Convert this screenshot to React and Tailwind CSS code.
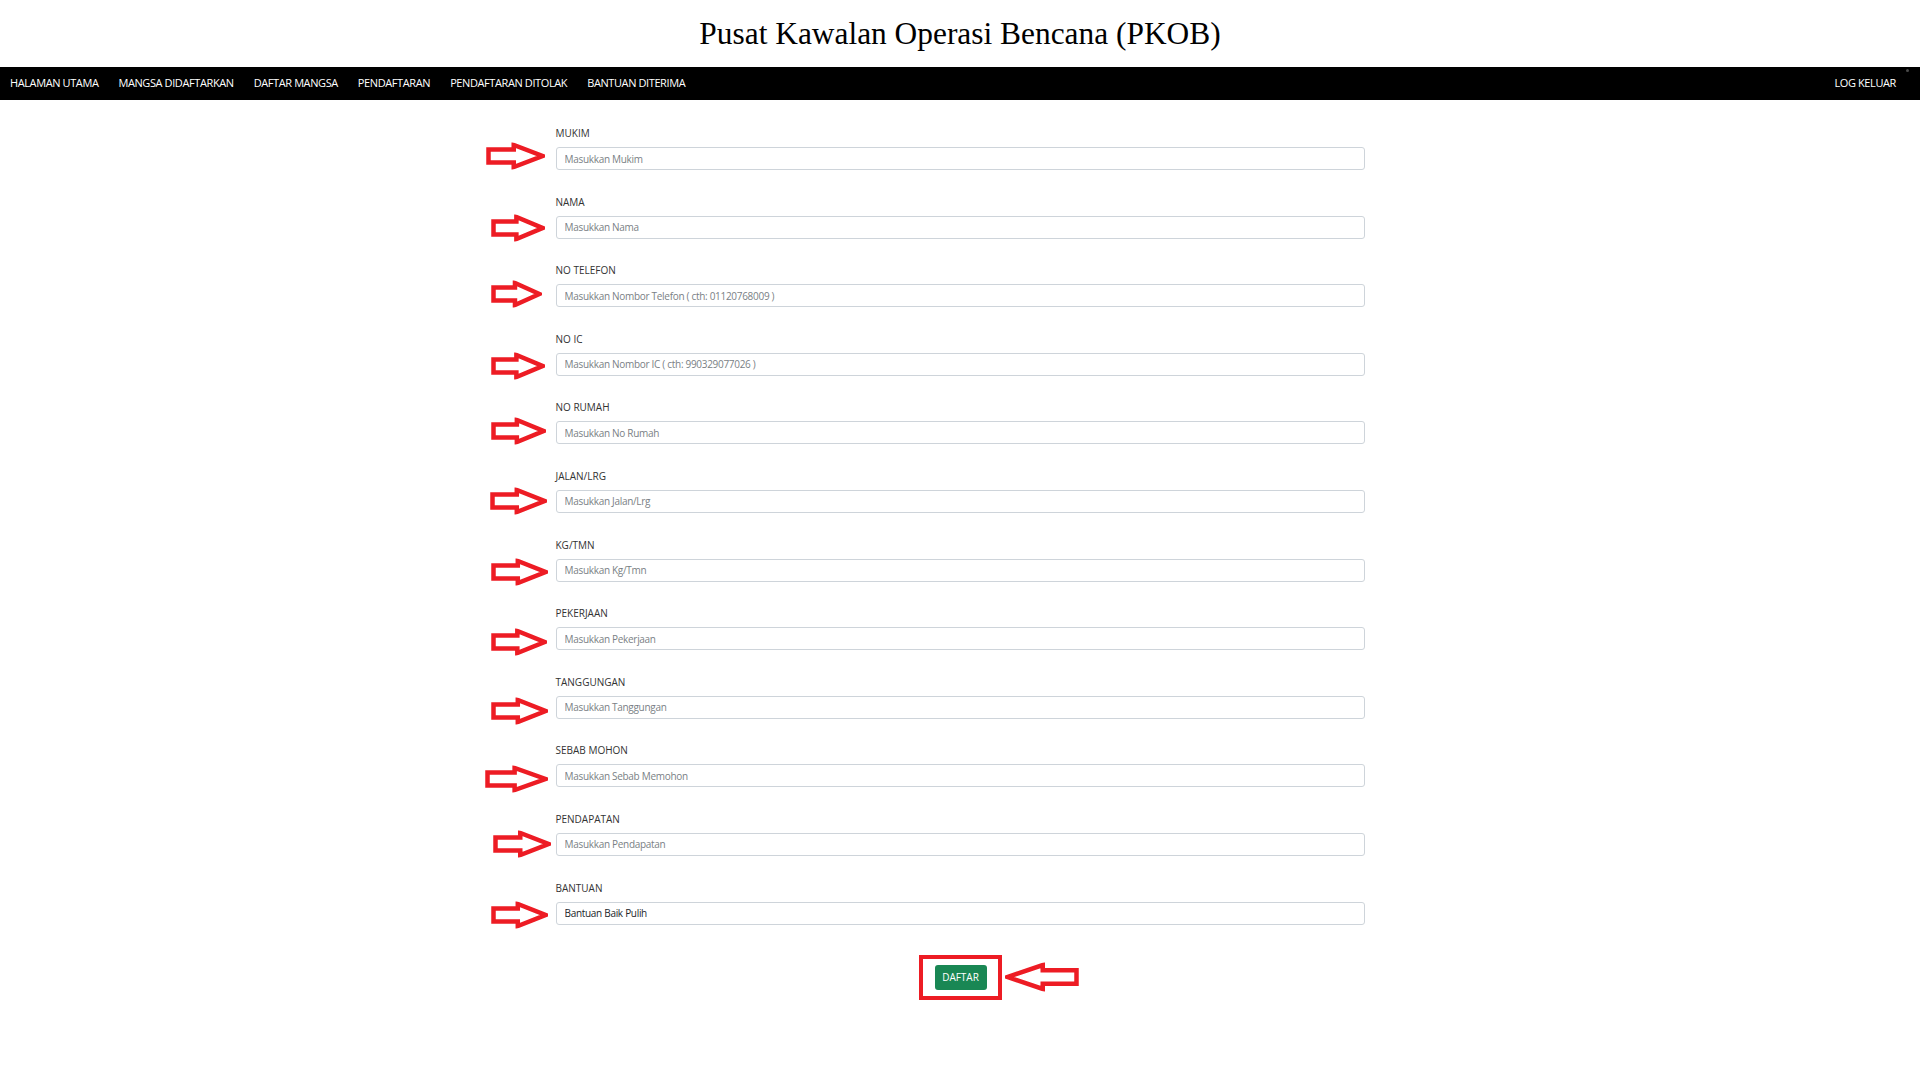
import { useState } from 'react'

const navItems = [
    'HALAMAN UTAMA',
    'MANGSA DIDAFTARKAN',
    'DAFTAR MANGSA',
    'PENDAFTARAN',
    'PENDAFTARAN DITOLAK',
    'BANTUAN DITERIMA',
]

// gap = distance from arrow tip to input, dy = offset from input centre
const fields = [
    { label: 'MUKIM', placeholder: 'Masukkan Mukim', gap: 11, w: 59, dy: -3 },
    { label: 'NAMA', placeholder: 'Masukkan Nama', gap: 11, w: 54, dy: 1 },
    { label: 'NO TELEFON', placeholder: 'Masukkan Nombor Telefon ( cth: 01120768009 )', gap: 14, w: 51, dy: -2 },
    { label: 'NO IC', placeholder: 'Masukkan Nombor IC ( cth: 990329077026 )', gap: 11, w: 54, dy: 2 },
    { label: 'NO RUMAH', placeholder: 'Masukkan No Rumah', gap: 10, w: 55, dy: -2 },
    { label: 'JALAN/LRG', placeholder: 'Masukkan Jalan/Lrg', gap: 9, w: 57, dy: 0 },
    { label: 'KG/TMN', placeholder: 'Masukkan Kg/Tmn', gap: 8, w: 57, dy: 2 },
    { label: 'PEKERJAAN', placeholder: 'Masukkan Pekerjaan', gap: 9, w: 56, dy: 3 },
    { label: 'TANGGUNGAN', placeholder: 'Masukkan Tanggungan', gap: 8, w: 57, dy: 4 },
    { label: 'SEBAB MOHON', placeholder: 'Masukkan Sebab Memohon', gap: 8, w: 63, dy: 3 },
    { label: 'PENDAPATAN', placeholder: 'Masukkan Pendapatan', gap: 5, w: 58, dy: 0 },
    { label: 'BANTUAN', value: 'Bantuan Baik Pulih', gap: 8, w: 57, dy: 2 },
]

const RED = '#ed1c24'

const ArrowRight = ({ w, h = 27 }) => {
    const s = 2.5
    const head = w * 0.47
    const t1 = h * 0.26
    const t2 = h * 0.74
    const pts = [
        [s, t1], [head, t1], [head, s], [w - s, h / 2], [head, h - s], [head, t2], [s, t2],
    ].map((p) => p.join(',')).join(' ')
    return (
        <svg width={w} height={h} viewBox={`0 0 ${w} ${h}`}>
            <polygon points={pts} fill="none" stroke={RED} strokeWidth="4.5" strokeLinejoin="miter" />
        </svg>
    )
}

const ArrowLeft = ({ w, h = 29 }) => {
    const s = 2.5
    const head = w * 0.51
    const t1 = h * 0.27
    const t2 = h * 0.73
    const pts = [
        [w - s, t1], [head, t1], [head, s], [s, h / 2], [head, h - s], [head, t2], [w - s, t2],
    ].map((p) => p.join(',')).join(' ')
    return (
        <svg width={w} height={h} viewBox={`0 0 ${w} ${h}`}>
            <polygon points={pts} fill="none" stroke={RED} strokeWidth="4.5" strokeLinejoin="miter" />
        </svg>
    )
}

const Field = ({ field }) => {
    const [val, setVal] = useState(field.value || '')
    return (
        <div className="flex flex-col">
            <label className="block text-[10px] leading-[14px] text-[#333] mb-[7px]">{field.label}</label>
            <div className="relative h-[23px]">
                <span
                    className="absolute top-1/2 flex"
                    style={{ right: `calc(100% + ${field.gap}px)`, transform: `translateY(calc(-50% + ${field.dy}px))` }}
                >
                    <ArrowRight w={field.w} />
                </span>
                <input
                    value={val}
                    onChange={(e) => setVal(e.target.value)}
                    placeholder={field.placeholder}
                    className="block w-full h-[23px] border border-[#ced4da] rounded-[3px] px-[8px] text-[10px] tracking-[-0.3px] text-[#212529] placeholder:text-[#7a7f85] outline-none bg-white"
                />
            </div>
        </div>
    )
}

export default function App() {
    return (
        <div className="min-h-screen bg-white" style={{ fontFamily: '"Open Sans", "Noto Sans", sans-serif' }}>
            <header className="h-[67px] flex items-center justify-center">
                <h1 className="text-[31.4px] text-black" style={{ fontFamily: '"Liberation Serif", "Times New Roman", serif' }}>
                    Pusat Kawalan Operasi Bencana (PKOB)
                </h1>
            </header>

            <nav className="h-[33px] bg-black flex items-center text-white text-[11px] tracking-[-0.4px]">
                <ul className="flex">
                    {navItems.map((item) => (
                        <li key={item} className="px-[10px] cursor-pointer">{item}</li>
                    ))}
                </ul>
                <div className="ml-auto flex items-center pr-[11px]">
                    <span className="px-[10px] cursor-pointer">LOG KELUAR</span>
                    <span className="w-[3px] h-[3px] rounded-full bg-[#4a4a4a] self-start -mt-[6px]" />
                </div>
            </nav>

            <form className="w-[809px] mx-auto pt-[26px] flex flex-col gap-[24.6px]" onSubmit={(e) => e.preventDefault()}>
                {fields.map((f) => (
                    <Field key={f.label} field={f} />
                ))}

                <div className="flex justify-center mt-[5.4px]">
                    <div className="relative border-[4px] border-[#ed1c24] w-[83px] h-[45px] flex items-center justify-center">
                        <button
                            type="submit"
                            className="w-[52px] h-[25px] bg-[#198754] text-white text-[10px] rounded-[3px] ml-[1px]"
                        >
                            DAFTAR
                        </button>
                        <span className="absolute left-[calc(100%+7px)] top-1/2 -translate-y-1/2 flex">
                            <ArrowLeft w={74} />
                        </span>
                    </div>
                </div>
            </form>
        </div>
    )
}
